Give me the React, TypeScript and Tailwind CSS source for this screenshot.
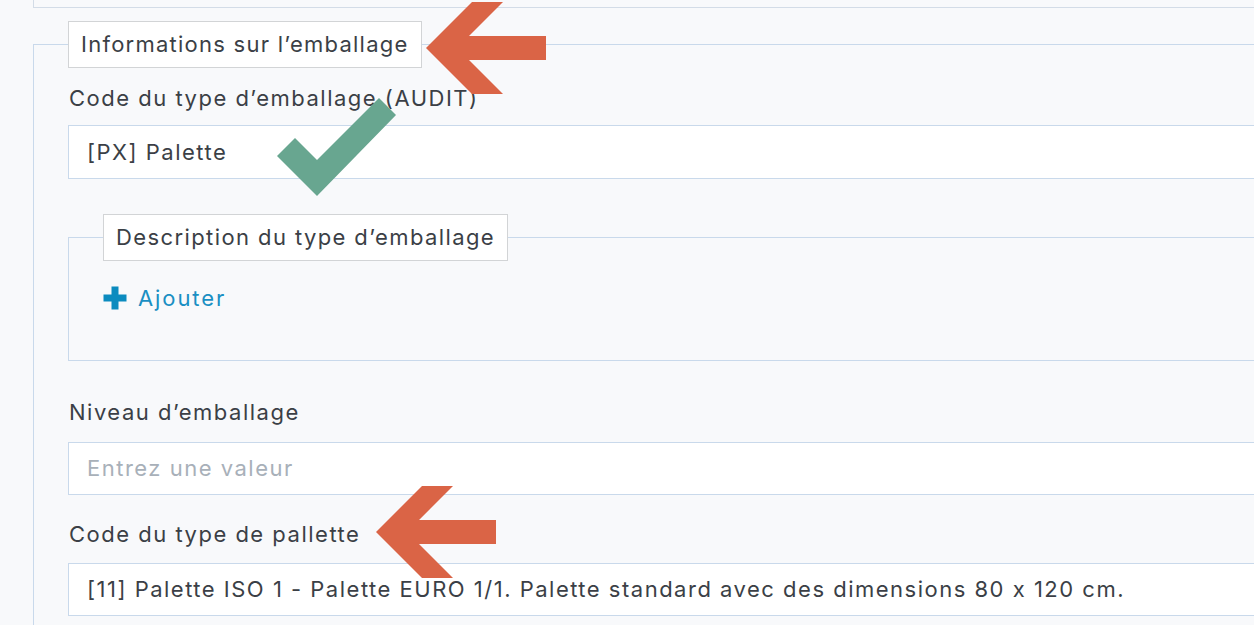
import React from "react";

export default function App() {
  return (
    <div
      className="relative w-[1254px] h-[625px] overflow-hidden bg-[#f8f9fb] text-[22px] tracking-[1.5px]"
      style={{ fontFamily: "Inter, 'Noto Sans', sans-serif" }}
    >
      {/* top box remnant */}
      <div className="ml-[33px] h-[8px] w-[1400px] border-l border-b border-[#d3dce7]" />

      {/* outer fieldset */}
      <fieldset className="mt-[13px] ml-[33px] w-[1400px] border-l border-t border-[#c9d9eb] pl-[34px] pr-0 pb-[20px]">
        <legend className="h-[47px] flex items-center px-[12px] bg-white border border-[#d2d4d6] text-[#3b3f46] tracking-[1.25px]">
          Informations sur l’emballage
        </legend>

        <div className="w-[1300px] flex flex-col">
          <div className="mt-[18px]">
            <div className="h-[24px] leading-[24px] pl-px text-[#3b3f46] mb-[15px]">
              Code du type d’emballage (AUDIT)
            </div>
            <div className="h-[54px] flex items-center bg-white border border-[#c9d9eb] pl-[18px] text-[#3b3f46]">
              [PX] Palette
            </div>
          </div>

          {/* inner fieldset */}
          <fieldset className="mt-[35px] border border-[#c9d9eb] pl-[34px] pb-[50px]">
            <legend className="h-[47px] flex items-center px-[12px] bg-white border border-[#d2d4d6] text-[#3b3f46] tracking-[1.4px]">
              Description du type d’emballage
            </legend>
            <div className="mt-[25px] h-[24px] flex items-center gap-[11px] text-[#1a8fc3] tracking-[1.9px]">
              <svg width="24" height="24" viewBox="0 0 24 24" className="shrink-0">
                <rect x="8.5" y="0.5" width="7" height="23" fill="#0b8bbf" />
                <rect x="0.5" y="8.5" width="23" height="7" fill="#0b8bbf" />
              </svg>
              <span>Ajouter</span>
            </div>
          </fieldset>

          <div className="mt-[39px]">
            <div className="h-[24px] leading-[24px] pl-px text-[#3b3f46] mb-[18px]">Niveau d’emballage</div>
            <div className="h-[53px] flex items-center bg-white border border-[#c9d9eb] pl-[18px] text-[#a8b0b9]">
              Entrez une valeur
            </div>
          </div>

          <div className="mt-[27px]">
            <div className="h-[24px] leading-[24px] pl-px text-[#3b3f46] mb-[17px]">Code du type de pallette</div>
            <div className="h-[53px] flex items-center bg-white border border-[#c9d9eb] pl-[18px] text-[#3b3f46] whitespace-nowrap">
              [11] Palette ISO 1 - Palette EURO 1/1. Palette standard avec des dimensions 80 x 120 cm.
            </div>
          </div>
        </div>
      </fieldset>

      {/* annotation overlay */}
      <svg
        className="absolute inset-0 pointer-events-none"
        width="1254"
        height="625"
        viewBox="0 0 1254 625"
      >
        <polygon
          points="426,48 472,2 503,2 469,36 546,36 546,60 469,60 503,94 472,94"
          fill="#da6446"
        />
        <polygon
          points="376,532 422,486 453,486 419,520 496,520 496,544 419,544 453,578 422,578"
          fill="#da6446"
        />
        <polygon points="277,156 295,138 317,160 379,98 396,115 317,196" fill="#68a690" />
      </svg>
    </div>
  );
}
